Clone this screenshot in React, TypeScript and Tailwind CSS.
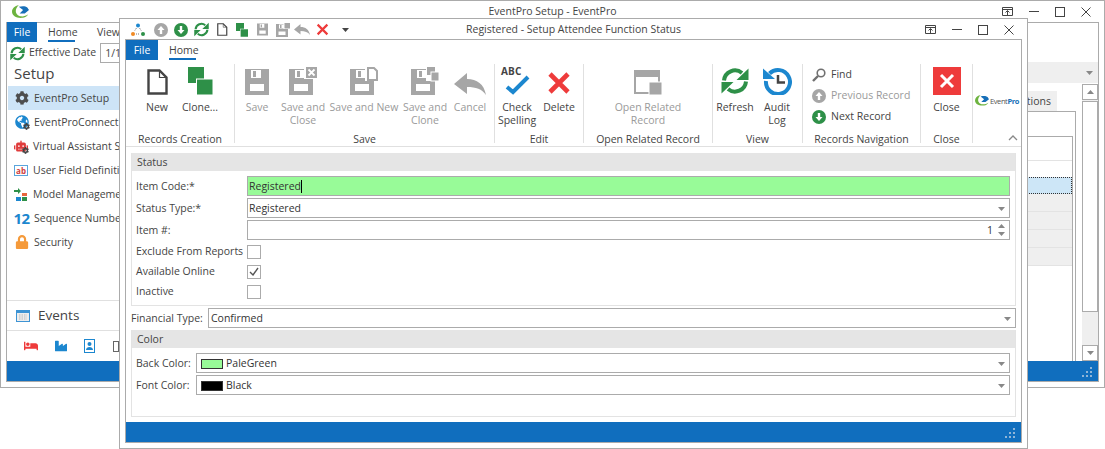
import { ReactNode } from "react";
import { FaBed, FaCog, FaGlobeAmericas, FaIndustry, FaLock, FaRobot } from "react-icons/fa";

const GREEN = "#2e9048";
const SAVE_GRAY = "#a6a6a6";
const FLOPPY = "M0 2h24v26H0zM6 3v8h10V3zM8 4h3v6H8zM5 17v7h14v-7z";

function Floppy({ children, w = 24 }: { children?: ReactNode; w?: number }) {
    return (
        <svg width={w} height="28" viewBox={`0 0 ${w} 28`}>
            <path fill={SAVE_GRAY} fillRule="evenodd" d={FLOPPY} />
            {children}
        </svg>
    );
}

function SaveClose() {
    return (
        <Floppy w={28}>
            <rect x="15" y="0" width="13" height="12" fill="#fff" />
            <rect x="17" y="0" width="11" height="11" fill={SAVE_GRAY} />
            <path d="M19.5 2.5l6 6M25.5 2.5l-6 6" stroke="#fff" strokeWidth="1.8" />
        </Floppy>
    );
}

function SaveNew() {
    return (
        <Floppy w={28}>
            <rect x="15" y="0" width="13" height="14" fill="#fff" />
            <path d="M18 1h6l3 3v9h-9z" fill="#fff" stroke={SAVE_GRAY} strokeWidth="2" />
        </Floppy>
    );
}

function SaveClone() {
    return (
        <Floppy w={28}>
            <rect x="15" y="0" width="13" height="14" fill="#fff" />
            <rect x="16" y="0" width="8" height="8" fill={SAVE_GRAY} />
            <rect x="20" y="5" width="8" height="9" fill={SAVE_GRAY} stroke="#fff" />
        </Floppy>
    );
}

function Doc({ s = 1 }: { s?: number }) {
    return (
        <svg width={21 * s} height={26 * s} viewBox="0 0 21 26">
            <path d="M1.5 1.5h11l7 7v16h-18z" fill="#fff" stroke="#444" strokeWidth="2.4" />
            <path d="M12.5 1.5v7h7" fill="none" stroke="#444" strokeWidth="1.2" />
        </svg>
    );
}

function Clone({ s = 1 }: { s?: number }) {
    return (
        <svg width={25 * s} height={28 * s} viewBox="0 0 25 28">
            <rect x="0" y="0" width="16" height="16" fill={GREEN} />
            <rect x="8.5" y="12" width="16.5" height="16" fill={GREEN} stroke="#fff" strokeWidth="1" />
        </svg>
    );
}

function Undo({ s = 1 }: { s?: number }) {
    return (
        <svg width={32 * s} height={22 * s} viewBox="0 0 32 22">
            <path d="M0 11L13 0v6c10 0 17 5 19 16-4-6-10-8-19-8v7z" fill={SAVE_GRAY} />
        </svg>
    );
}

function RedX({ s = 24, w = 4.6 }: { s?: number; w?: number }) {
    return (
        <svg width={s} height={s} viewBox="0 0 24 24">
            <path d="M3 3l18 18M21 3L3 21" stroke="#ee3b3b" strokeWidth={w} />
        </svg>
    );
}

function Refresh({ s = 28 }: { s?: number }) {
    return (
        <svg width={s} height={s} viewBox="0 0 28 28" className="shrink-0">
            <path d="M3 13.500A11 11 0 0 1 21 6" fill="none" stroke={GREEN} strokeWidth="4" />
            <path d="M27.500 13H15.500L27.500 1.500z" fill={GREEN} />
            <g transform="rotate(180 14 14)">
                <path d="M3 13.500A11 11 0 0 1 21 6" fill="none" stroke={GREEN} strokeWidth="4" />
                <path d="M27.500 13H15.500L27.500 1.500z" fill={GREEN} />
            </g>
        </svg>
    );
}

function AuditLog() {
    return (
        <svg width="29" height="28" viewBox="0 0 29 28">
            <path d="M6.500 6.500A12 12 0 1 1 3 14" fill="none" stroke="#1c87cf" strokeWidth="4" />
            <path d="M0 1.500L12 12H0z" fill="#1c87cf" />
            <path d="M15 8v7.500h7" fill="none" stroke="#444" strokeWidth="2.500" />
        </svg>
    );
}

function CircleArrow({ up, color, s = 14 }: { up?: boolean; color: string; s?: number }) {
    return (
        <svg width={s} height={s} viewBox="0 0 14 14">
            <circle cx="7" cy="7" r="7" fill={color} />
            <path d={up ? "M7 3L3.500 7H5.800v4h2.400V7H10.500z" : "M7 11l3.500-4H8.200V3H5.800v4H3.500z"} fill="#fff" />
        </svg>
    );
}

function Swirl({ w = 17 }: { w?: number }) {
    return (
        <svg width={w} height={w * 0.8} viewBox="0 0 20 16" className="shrink-0">
            <path d="M8 0C3 1 0 4 0 8c0 5 6 8 13 7 3-.5 5-2 6-4-4 3-9 3-12 1C3 9 4 4 8 0z" fill="#6db33f" />
            <path d="M8 2c4-1 8-1 10 1l2 3-5 4H9l4-4z" fill="#176fb8" />
        </svg>
    );
}

function Caret({ up, color = "#888" }: { up?: boolean; color?: string }) {
    return (
        <svg width="7" height="4" viewBox="0 0 7 4" className="shrink-0">
            <path d={up ? "M3.500 0L7 4H0z" : "M0 0h7L3.500 4z"} fill={color} />
        </svg>
    );
}

function WindowButtons() {
    return (
        <div className="flex items-center justify-end gap-[16px] pr-[8px]">
            <svg width="11" height="9" viewBox="0 0 11 9">
                <path d="M.5.500h10v8H.5zM.5 2.500h10" fill="none" stroke="#444" />
                <path d="M5.500 8.500V4M3.500 5.500l2-2 2 2" fill="none" stroke="#444" />
            </svg>
            <div className="w-[10px] h-px bg-[#444]" />
            <div className="w-[10px] h-[10px] border border-[#444]" />
            <svg width="10" height="10" viewBox="0 0 10 10">
                <path d="M.5.500l9 9M9.500.500l-9 9" stroke="#444" />
            </svg>
        </div>
    );
}

function Grip() {
    return (
        <svg width="11" height="11" viewBox="0 0 11 11" className="shrink-0">
            <path d="M8 0h2v2H8zM4 4h2v2H4zM8 4h2v2H8zM0 8h2v2H0zM4 8h2v2H4zM8 8h2v2H8z" fill="#8fb5d8" />
        </svg>
    );
}

function StatusBar() {
    return (
        <div className="h-[20px] shrink-0 bg-[#106ebe] flex items-center justify-end pr-[5px] pt-[2px]">
            <Grip />
        </div>
    );
}

function RibbonButton({ icon, label, w, off }: { icon: ReactNode; label: ReactNode; w: string; off?: boolean }) {
    return (
        <div className={`${w} shrink-0 flex flex-col items-center`}>
            <div className="h-[31px] flex items-end justify-center">{icon}</div>
            <div className={`mt-[6px] text-center leading-[13px] whitespace-nowrap ${off ? "text-[#9a9a9a]" : "text-[#444]"}`}>{label}</div>
        </div>
    );
}

function RibbonGroup({ label, w, last, align = "justify-center", children }: { label: string; w: string; last?: boolean; align?: string; children?: ReactNode }) {
    return (
        <div className={`${w} shrink-0 h-[79px] flex flex-col ${last ? "" : "border-r border-[#e0e0e0]"}`}>
            <div className={`h-[67px] shrink-0 flex ${align}`}>{children}</div>
            <div className="h-[16px] shrink-0 leading-[16px] text-center text-[#444] whitespace-nowrap">{label}</div>
        </div>
    );
}

function NavRow({ icon, text, off }: { icon: ReactNode; text: string; off?: boolean }) {
    return (
        <div className="h-[21px] flex items-center gap-[5px]">
            <div className="w-[14px] flex justify-center">{icon}</div>
            <span className={off ? "text-[#9a9a9a]" : "text-[#444]"}>{text}</span>
        </div>
    );
}

function Field({ label, labelW, children, className }: { label: string; labelW: string; children: ReactNode; className?: string }) {
    return (
        <div className={`flex items-center h-[20px] ${className ?? ""}`}>
            <div className={`${labelW} shrink-0 text-[#444] whitespace-nowrap`}>{label}</div>
            {children}
        </div>
    );
}

function Input({ children, green, caret }: { children?: ReactNode; green?: boolean; caret?: boolean }) {
    return (
        <div className={`flex-1 h-[20px] border border-[#ababab] flex items-center pl-[1px] pr-[4px] pt-px text-[#333] ${green ? "bg-[#98fb98]" : "bg-white"}`}>
            {children}
            {caret && <div className="w-px h-[13px] bg-black" />}
        </div>
    );
}

function Check({ checked }: { checked?: boolean }) {
    return (
        <div className="w-[14px] h-[14px] -mt-px border border-[#ababab] flex items-center justify-center">
            {checked && (
                <svg width="10" height="9" viewBox="0 0 10 9">
                    <path d="M1 5l3 3 5-7" fill="none" stroke="#555" strokeWidth="1.4" />
                </svg>
            )}
        </div>
    );
}

function SectionHeader({ title }: { title: string }) {
    return <div className="h-[18px] bg-[#e5e5e5] pl-[5px] leading-[18px] text-[#444]">{title}</div>;
}

function ColorField({ label, color, name }: { label: string; color: string; name: string }) {
    return (
        <Field label={label} labelW="w-[60px] pt-px">
            <Input>
                <div className="w-[22px] h-[10px] border border-[#333] ml-[3px] mr-[3px]" style={{ backgroundColor: color }} />
                <span>{name}</span>
                <div className="flex-1" />
                <Caret />
            </Input>
        </Field>
    );
}

function SetupNav() {
    const items: { text: string; icon: ReactNode; active?: boolean }[] = [
        { text: "EventPro Setup", active: true, icon: <FaCog size={14} color="#4d4d4d" /> },
        {
            text: "EventProConnect",
            icon: (
                <span className="relative">
                    <FaGlobeAmericas size={14} color="#1c87cf" />
                    <FaCog size={7} color="#444" className="absolute -right-[1px] -bottom-[1px]" />
                </span>
            ),
        },
        {
            text: "Virtual Assistant Setup",
            icon: (
                <span className="relative">
                    <FaRobot size={14} color="#e03c3c" />
                    <FaCog size={7} color="#444" className="absolute -right-[1px] -bottom-[1px]" />
                </span>
            ),
        },
        {
            text: "User Field Definitions",
            icon: (
                <span className="relative w-[14px] h-[11px] border border-[#5aa5dc] text-[8px] leading-[9px] text-[#d04040] text-center font-bold">
                    ab
                </span>
            ),
        },
        {
            text: "Model Management",
            icon: (
                <svg width="14" height="14" viewBox="0 0 14 14">
                    <path d="M0 3h4V1l3 3-3 3V5H0z" fill={GREEN} />
                    <rect x="8" y="6" width="5" height="3" fill="#e8663c" />
                    <rect x="2" y="10" width="5" height="4" fill="#1c87cf" />
                    <rect x="8" y="10" width="5" height="4" fill={GREEN} />
                </svg>
            ),
        },
        {
            text: "Sequence Numbers",
            icon: <span className="text-[15px] leading-[15px] font-bold text-[#1c87cf] tracking-[-0.5px]">12</span>,
        },
        { text: "Security", icon: <FaLock size={14} color="#f59a3a" /> },
    ];

    return (
        <div className="flex flex-col">
            {items.map((it) => (
                <div key={it.text} className={`h-[24px] shrink-0 ml-[1px] flex items-center pl-[6px] gap-[5px] whitespace-nowrap text-[#444] ${it.active ? "bg-[#cde4f7]" : ""}`}>
                    <span className="w-[15px] flex justify-center">{it.icon}</span>
                    <span className="pt-px">{it.text}</span>
                </div>
            ))}
        </div>
    );
}

function BackWindow() {
    return (
        <div className="absolute left-0 top-0 w-[1105px] h-[388px] border border-[#ababab] bg-white flex flex-col px-[5px] pb-[5px]">
            <div className="h-[21px] shrink-0 grid grid-cols-[1fr_auto_1fr] items-center">
                <div className="pl-[6px]"><Swirl /></div>
                <div className="text-[#444]">EventPro Setup - EventPro</div>
                <WindowButtons />
            </div>
            <div className="flex-1 min-h-0 border border-[#ababab] flex flex-col">
                <div className="flex-1 min-h-0 flex">
                    <div className="w-[113px] shrink-0 flex flex-col">
                        <div className="h-[20px] shrink-0 flex items-start">
                            <div className="w-[32px] h-[20px] -mt-px pt-px bg-[#106ebe] text-white flex items-center justify-center">File</div>
                            <div className="ml-[11px] -mt-px text-[#444] border-b-2 border-[#106ebe] h-[20px] leading-[20px] w-[27px]">Home</div>
                            <div className="ml-[22px] -mt-px leading-[20px] text-[#444]">View</div>
                        </div>
                        <div className="h-[20px] shrink-0 flex items-center pl-[3px] gap-[4px] whitespace-nowrap text-[#444]">
                            <Refresh s={15} />
                            <span>Effective Date</span>
                            <div className="h-[20px] w-[60px] shrink-0 border border-[#ababab] pl-[4px] leading-[18px]">1/1/2020</div>
                        </div>
                        <div className="h-[23px] shrink-0 pl-[7px] text-[15px] leading-[21px] text-[#444]">Setup</div>
                        <SetupNav />
                        <div className="flex-1" />
                        <div className="h-[31px] shrink-0 border-t border-[#e0e0e0] flex items-center pl-[9px] gap-[8px] text-[13.5px] text-[#444] border-b border-b-[#e0e0e0]">
                            <svg width="14" height="12" viewBox="0 0 14 12">
                                <rect x=".5" y=".5" width="13" height="11" fill="#eee" stroke="#3e94d4" />
                                <rect x="1" y="1" width="12" height="2" fill="#3e94d4" />
                                <path d="M3 5h8M3 7h8M3 9h8" stroke="#bbb" strokeDasharray="1.500 1" />
                            </svg>
                            <span>Events</span>
                        </div>
                        <div className="h-[30px] shrink-0 flex items-center pl-[17px] gap-[17px]">
                            <FaBed size={14} color="#ee3b3b" />
                            <FaIndustry size={12} color="#1c87cf" />
                            <svg width="12" height="14" viewBox="0 0 12 14">
                                <rect x=".5" y=".5" width="10" height="13" fill="#fff" stroke="#1c87cf" />
                                <circle cx="5.500" cy="5" r="2" fill="#1c87cf" />
                                <path d="M2 11c0-4 7-4 7 0z" fill="#1c87cf" />
                            </svg>
                            <div className="w-[6px] h-[11px] border border-[#666]" />
                        </div>
                    </div>
                    <div className="flex-1 min-w-0 flex flex-col">
                        <div className="h-[39px] shrink-0" />
                        <div className="h-[21px] shrink-0 bg-[#efefef] flex items-center justify-end pr-[5px]"><Caret /></div>
                        <div className="flex-1 min-h-0 flex pt-[1px]">
                            <div className="flex-1 min-w-0 flex flex-col pr-[6px] pt-[7px]">
                                <div className="h-[20px] shrink-0 flex justify-end pr-[19px]">
                                    <div className="bg-[#efefef] pl-[4px] pr-[6px] leading-[20px] text-[#444]">Options</div>
                                </div>
                                <div className="flex-1 min-h-0 border border-[#ababab] border-b-0 pt-[24px] pr-[2px]">
                                    <div className="h-full border-t border-r border-[#ababab] flex flex-col">
                                        <div className="h-[24px] shrink-0 border-b border-[#e3e3e3]" />
                                        <div className="h-[16px] shrink-0" />
                                        <div className="h-[17px] shrink-0 bg-[#cde6f7] border border-dotted border-[#333]" />
                                        {[0, 1, 2, 3].map((i) => (
                                            <div key={i} className="h-[18px] shrink-0 bg-[#efefef] border-b border-[#e3e3e3]" />
                                        ))}
                                    </div>
                                </div>
                            </div>
                            <div className="w-[16px] shrink-0 bg-[#efefef] flex flex-col">
                                <div className="h-[16px] shrink-0 bg-white border border-[#ababab] flex items-center justify-center"><Caret up /></div>
                                <div className="h-[211px] shrink-0 mt-[1px] bg-white border border-[#ababab]" />
                                <div className="flex-1" />
                                <div className="h-[16px] shrink-0 bg-white border border-[#ababab] flex items-center justify-center"><Caret /></div>
                            </div>
                        </div>
                    </div>
                </div>
                <StatusBar />
            </div>
        </div>
    );
}

function QuickAccess() {
    return (
        <div className="flex items-center pl-[6px] h-[21px]">
            <svg width="14" height="14" viewBox="0 0 14 14" className="mr-[9px]">
                <circle cx="7" cy="2.500" r="2" fill="#1c87cf" />
                <circle cx="2" cy="11" r="2" fill="#f08a24" />
                <circle cx="12" cy="11" r="2" fill={GREEN} />
                <path d="M5.500 5L3.500 8M8.500 5l2 3M5 11h4" stroke="#777" strokeDasharray="1 1" />
            </svg>
            <div className="mr-[6px]"><CircleArrow up color={SAVE_GRAY} /></div>
            <div className="mr-[6px]"><CircleArrow color={GREEN} /></div>
            <div className="mr-[8px]"><Refresh s={15} /></div>
            <div className="mr-[8px]"><Doc s={0.5} /></div>
            <div className="mr-[9px]"><Clone s={0.5} /></div>
            <svg width="11" height="13" viewBox="0 2 24 26" className="mr-[8px]">
                <path fill={SAVE_GRAY} fillRule="evenodd" d={FLOPPY} />
            </svg>
            <svg width="14" height="14" viewBox="0 0 28 28" className="mr-[4px]">
                <path fill={SAVE_GRAY} fillRule="evenodd" d={FLOPPY} />
                <rect x="15" y="0" width="13" height="12" fill="#fff" />
                <rect x="17" y="0" width="11" height="11" fill={SAVE_GRAY} />
            </svg>
            <div className="mr-[6px]"><Undo s={0.5} /></div>
            <div className="mr-[13px]"><RedX s={13} w={4} /></div>
            <Caret color="#444" />
        </div>
    );
}

function Ribbon() {
    const lines = (a: string, b: string) => (
        <>
            {a}
            <br />
            {b}
        </>
    );
    return (
        <div className="h-[87px] shrink-0 border-b border-[#e0e0e0] flex pt-[4px] relative">
            <RibbonGroup label="Records Creation" w="w-[109px]" align="justify-start pl-[14px]">
                <RibbonButton w="w-[34px]" label="New" icon={<Doc />} />
                <RibbonButton w="w-[52px]" label="Clone..." icon={<Clone />} />
            </RibbonGroup>
            <RibbonGroup label="Save" w="w-[260px]" align="justify-start pl-[2px]">
                <RibbonButton off w="w-[40px]" label="Save" icon={<Floppy />} />
                <RibbonButton off w="w-[52px]" label={lines("Save and", "Close")} icon={<SaveClose />} />
                <RibbonButton off w="w-[70px]" label="Save and New" icon={<SaveNew />} />
                <RibbonButton off w="w-[52px]" label={lines("Save and", "Clone")} icon={<SaveClone />} />
                <RibbonButton off w="w-[38px]" label="Cancel" icon={<Undo />} />
            </RibbonGroup>
            <RibbonGroup label="Edit" w="w-[89px]" align="justify-start">
                <RibbonButton
                    w="w-[44px]"
                    label={lines("Check", "Spelling")}
                    icon={
                        <div className="relative w-[32px] h-[28px]">
                            <span className="absolute left-0 top-[-3px] text-[10px] font-bold text-[#444] tracking-[0.2px]">ABC</span>
                            <svg width="32" height="28" viewBox="0 0 32 28">
                                <path d="M6 20l6 5L27 10" fill="none" stroke="#1c87cf" strokeWidth="4" />
                            </svg>
                        </div>
                    }
                />
                <RibbonButton w="w-[40px]" label="Delete" icon={<RedX />} />
            </RibbonGroup>
            <RibbonGroup label="Open Related Record" w="w-[129px]">
                <RibbonButton
                    off
                    w="w-[100px]"
                    label={lines("Open Related", "Record")}
                    icon={
                        <svg width="28" height="25" viewBox="0 0 28 25">
                            <path d="M1 5h24v18H1z" fill="none" stroke={SAVE_GRAY} strokeWidth="2" />
                            <rect x="0" y="0" width="26" height="7" fill={SAVE_GRAY} />
                            <rect x="15" y="12" width="13" height="13" fill={SAVE_GRAY} stroke="#fff" />
                        </svg>
                    }
                />
            </RibbonGroup>
            <RibbonGroup label="View" w="w-[90px]" align="justify-start">
                <RibbonButton w="w-[44px]" label="Refresh" icon={<Refresh />} />
                <RibbonButton w="w-[40px]" label={lines("Audit", "Log")} icon={<AuditLog />} />
            </RibbonGroup>
            <RibbonGroup label="Records Navigation" w="w-[118px]">
                <div className="w-full pl-[9px] flex flex-col">
                    <NavRow
                        text="Find"
                        icon={
                            <svg width="14" height="14" viewBox="0 0 14 14">
                                <circle cx="9" cy="5" r="3.800" fill="none" stroke="#707070" strokeWidth="1.600" />
                                <path d="M6 8l-5 5" stroke="#707070" strokeWidth="2.400" />
                            </svg>
                        }
                    />
                    <NavRow off text="Previous Record" icon={<CircleArrow up color={SAVE_GRAY} />} />
                    <NavRow text="Next Record" icon={<CircleArrow color={GREEN} />} />
                </div>
            </RibbonGroup>
            <RibbonGroup label="Close" w="w-[52px]">
                <RibbonButton
                    w="w-[50px]"
                    label="Close"
                    icon={
                        <div className="w-[28px] h-[28px] bg-[#ee3b3b] flex items-center justify-center">
                            <svg width="16" height="16" viewBox="0 0 16 16">
                                <path d="M2 2l12 12M14 2L2 14" stroke="#fff" strokeWidth="3" />
                            </svg>
                        </div>
                    }
                />
            </RibbonGroup>
            <div className="flex-1 flex items-start pt-[31px] pl-[2px]">
                <div className="flex items-center gap-[1px]">
                    <Swirl w={14} />
                    <span className="text-[7.5px] leading-[10px] tracking-[-0.4px] text-[#555]">Event<span className="text-[#176fb8] font-bold">Pro</span></span>
                </div>
            </div>
            <svg width="10" height="6" viewBox="0 0 10 6" className="absolute right-[3px] bottom-[5px]">
                <path d="M1 5l4-4 4 4" fill="none" stroke="#888" strokeWidth="1.300" />
            </svg>
        </div>
    );
}

function StatusForm() {
    return (
        <div className="flex-1 min-h-0 flex flex-col px-[5px] pt-[6px]">
            <div className="h-[153px] shrink-0 border border-[#e3e3e3] border-t-0">
                <SectionHeader title="Status" />
                <div className="pl-[4px] pr-[5px] pt-[5px] flex flex-col gap-[2px]">
                    <Field label="Item Code:*" labelW="w-[111px] pt-px">
                        <Input green caret>Registered</Input>
                    </Field>
                    <Field label="Status Type:*" labelW="w-[111px] pt-px">
                        <Input>
                            <span className="flex-1">Registered</span>
                            <Caret />
                        </Input>
                    </Field>
                    <Field label="Item #:" labelW="w-[111px] pt-px">
                        <Input>
                            <span className="flex-1 text-right pr-[5px]">1</span>
                            <div className="flex flex-col gap-[4px] -mt-px">
                                <Caret up />
                                <Caret />
                            </div>
                        </Input>
                    </Field>
                    <div className="flex flex-col">
                        <Field label="Exclude From Reports" labelW="w-[111px]"><Check /></Field>
                        <Field label="Available Online" labelW="w-[111px]"><Check checked /></Field>
                        <Field label="Inactive" labelW="w-[111px]"><Check /></Field>
                    </div>
                </div>
            </div>
            <Field label="Financial Type:" labelW="w-[77px] pt-px" className="mt-[2px] shrink-0">
                <Input>
                    <span className="flex-1 pl-[1px]">Confirmed</span>
                    <Caret />
                </Input>
            </Field>
            <div className="h-[87px] shrink-0 mt-[2px] border border-[#e3e3e3] border-t-0">
                <SectionHeader title="Color" />
                <div className="pl-[4px] pr-[5px] pt-[5px] flex flex-col gap-[2px]">
                    <ColorField label="Back Color:" color="#98fb98" name="PaleGreen" />
                    <ColorField label="Font Color:" color="#000" name="Black" />
                </div>
            </div>
        </div>
    );
}

function FrontWindow() {
    return (
        <div className="absolute left-[119px] top-[18px] w-[909px] h-[431px] border border-[#ababab] bg-white flex flex-col px-[5px] pb-[5px]">
            <div className="h-[20px] shrink-0 grid grid-cols-[1fr_auto_1fr] items-center">
                <QuickAccess />
                <div className="text-[#444] whitespace-nowrap">Registered - Setup Attendee Function Status</div>
                <WindowButtons />
            </div>
            <div className="flex-1 min-h-0 border border-[#ababab] flex flex-col">
                <div className="h-[20px] shrink-0 flex items-center">
                    <div className="w-[32px] h-[20px] pt-px bg-[#106ebe] text-white flex items-center justify-center">File</div>
                    <div className="ml-[11px] w-[27px] h-[20px] leading-[20px] text-[#444] border-b-2 border-[#106ebe]">Home</div>
                </div>
                <Ribbon />
                <StatusForm />
                <StatusBar />
            </div>
        </div>
    );
}

export default function App() {
    return (
        <div className="relative w-[1105px] h-[449px] overflow-hidden bg-white font-['Open_Sans',sans-serif] text-[10.5px]">
            <BackWindow />
            <FrontWindow />
        </div>
    );
}
